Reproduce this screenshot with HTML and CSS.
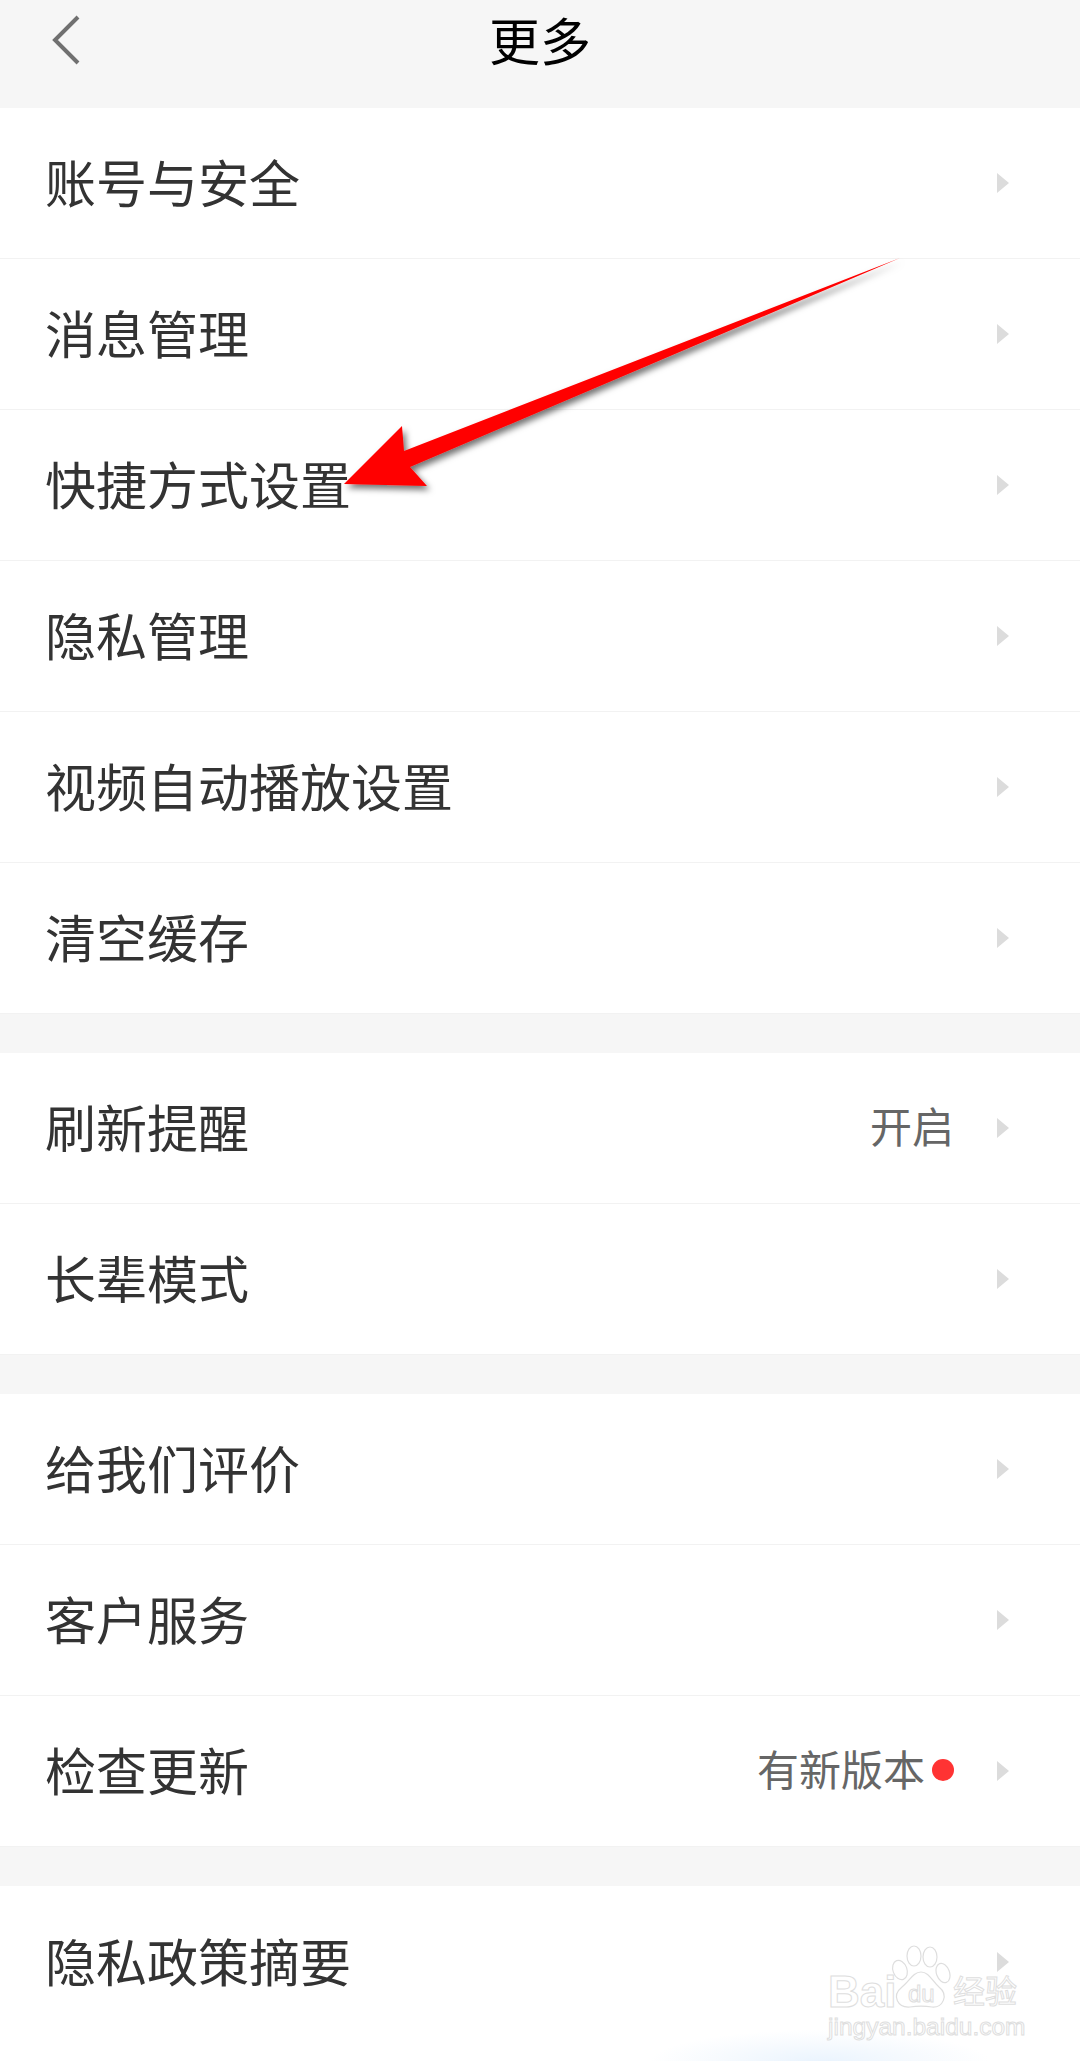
FILE: index.html
```html
<!DOCTYPE html>
<html lang="zh">
<head>
	<meta charset="utf-8">
	<title>更多</title>
	<link rel="stylesheet" href="styles.css">
</head>
<body>
	<div class="page">
		<header class="topbar">
			<svg class="back" width="30" height="50" viewBox="0 0 30 50">
				<path d="M27 2 L4 25 L27 48" fill="none" stroke="#707070" stroke-width="4"/>
			</svg>
			<h1 class="title">更多</h1>
		</header>

		<section class="group">
			<div class="row"><span class="name">账号与安全</span><i class="more"></i></div>
			<div class="row"><span class="name">消息管理</span><i class="more"></i></div>
			<div class="row"><span class="name">快捷方式设置</span><i class="more"></i></div>
			<div class="row"><span class="name">隐私管理</span><i class="more"></i></div>
			<div class="row"><span class="name">视频自动播放设置</span><i class="more"></i></div>
			<div class="row"><span class="name">清空缓存</span><i class="more"></i></div>
		</section>

		<section class="group">
			<div class="row"><span class="name">刷新提醒</span><span class="value">开启</span><i class="more"></i></div>
			<div class="row"><span class="name">长辈模式</span><i class="more"></i></div>
		</section>

		<section class="group">
			<div class="row"><span class="name">给我们评价</span><i class="more"></i></div>
			<div class="row"><span class="name">客户服务</span><i class="more"></i></div>
			<div class="row"><span class="name">检查更新</span><span class="value">有新版本<b class="dot"></b></span><i class="more"></i></div>
		</section>

		<section class="group last">
			<div class="row"><span class="name">隐私政策摘要</span><i class="more"></i></div>
		</section>

		<!-- annotation arrow -->
		<svg class="arrow" width="1080" height="560" viewBox="0 0 1080 560">
			<defs>
				<filter id="arrowShadow" x="-10%" y="-10%" width="120%" height="130%">
					<feDropShadow dx="3" dy="4" stdDeviation="3" flood-color="#000" flood-opacity="0.55"/>
				</filter>
			</defs>
			<polygon points="900,258 404,451 402,426 344,484 427,486 410,467" fill="#ff0000" filter="url(#arrowShadow)"/>
		</svg>

		<!-- watermark -->
		<div class="mark">
			<svg class="paw" width="60" height="66" viewBox="0 0 60 66">
				<g fill="#fff" stroke="#dedede" stroke-width="1.2">
					<ellipse cx="9" cy="25" rx="7" ry="10" transform="rotate(-20 9 25)"/>
					<ellipse cx="23" cy="11" rx="7" ry="10"/>
					<ellipse cx="39" cy="12" rx="7" ry="10"/>
					<ellipse cx="52" cy="28" rx="6.5" ry="10" transform="rotate(-20 52 28)"/>
					<path d="M30 27 C38 27 41 36 48 42 C58 50 52 63 41 62 C34 61 26 61 19 62 C7 63 0 51 11 42 C18 37 22 27 30 27 Z"/>
				</g>
			</svg>
			<span class="mark-bai">Bai</span>
			<span class="mark-du">du</span>
			<span class="mark-cn">经验</span>
			<span class="mark-url">jingyan.baidu.com</span>
		</div>
	</div>
</body>
</html>
```

FILE: styles.css
```css
* {
	box-sizing: border-box;
}
html, body {
	margin: 0;
	padding: 0;
}
body {
	font-family: "Noto Sans CJK SC", "Noto Sans", sans-serif;
	background: #f6f6f6;
}
.page {
	position: relative;
	width: 1080px;
	height: 2061px;
	overflow: hidden;
}
.topbar {
	position: relative;
	height: 108px;
	padding-bottom: 30px;
	display: flex;
	align-items: center;
	justify-content: center;
}
.back {
	position: absolute;
	left: 51px;
	top: 15px;
}
.title {
	margin: 0;
	font-size: 51px;
	font-weight: 400;
	line-height: 78px;
	color: #000;
}
.group {
	background: #fff;
	margin-bottom: 39px;
}
.group.last {
	margin-bottom: 0;
	height: 176px;
	background: radial-gradient(ellipse 170px 32px at 820px 176px, #eaf4fe 0%, #f6fafe 55%, #fff 100%);
}
.row {
	height: 151px;
	padding: 0 71px 0 45px;
	display: flex;
	align-items: center;
	border-bottom: 1px solid #f2f2f2;
}
.group.last .row {
	border-bottom: 0;
}
.name {
	flex: 1;
	margin-top: -4px;
	font-size: 51px;
	color: #333;
}
.value {
	display: flex;
	align-items: center;
	margin-top: -7px;
	margin-right: 43px;
	font-size: 42px;
	color: #666;
}
.dot {
	width: 22px;
	height: 22px;
	margin-top: 4px;
	margin-left: 7px;
	border-radius: 50%;
	background: #ff3333;
}
.more {
	width: 0;
	height: 0;
	border-left: 12px solid #dcdcdc;
	border-top: 10px solid transparent;
	border-bottom: 10px solid transparent;
}
.arrow {
	position: absolute;
	left: 0;
	top: 0;
}
.mark {
	position: absolute;
	left: 820px;
	top: 1940px;
	width: 210px;
	height: 105px;
	color: #fff;
	-webkit-text-stroke: 1px #dedede;
}
.mark span {
	position: absolute;
	white-space: nowrap;
	line-height: 1;
}
.paw {
	position: absolute;
	left: 71px;
	top: 5px;
}
.mark-bai {
	left: 8px;
	top: 30px;
	font-family: "Liberation Sans", sans-serif;
	font-size: 44px;
	font-weight: 700;
}
.mark-du {
	left: 88px;
	top: 42px;
	font-family: "Liberation Sans", sans-serif;
	font-size: 24px;
}
.mark-cn {
	left: 133px;
	top: 33px;
	font-size: 32px;
}
.mark-url {
	left: 8px;
	top: 75px;
	font-family: "Liberation Sans", sans-serif;
	font-size: 24.5px;
}
```
